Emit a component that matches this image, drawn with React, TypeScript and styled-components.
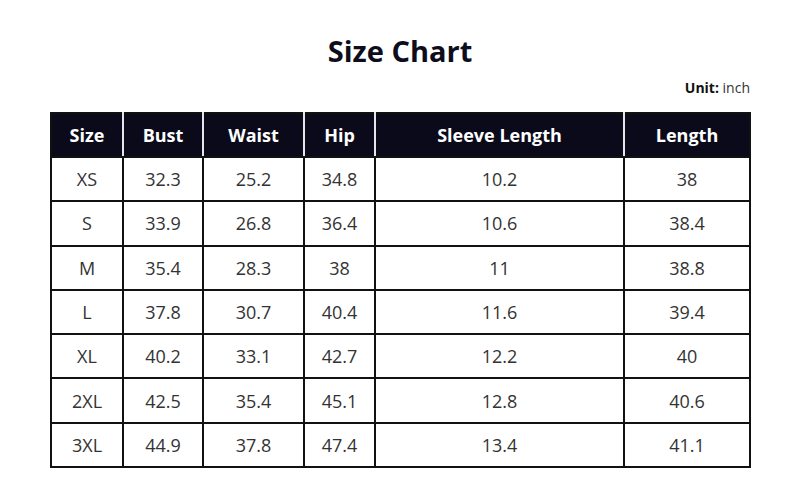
import React from 'react';
import styled, { createGlobalStyle } from 'styled-components';

const GlobalStyle = createGlobalStyle`
  body {
    margin: 0;
    background: #ffffff;
    font-family: "Open Sans", "Noto Sans", sans-serif;
  }
`;

const columns = [
  { label: 'Size', width: 70 },
  { label: 'Bust', width: 78 },
  { label: 'Waist', width: 99 },
  { label: 'Hip', width: 69 },
  { label: 'Sleeve Length', width: 247 },
  { label: 'Length', width: 124 }
];

const rows = [
  ['XS', '32.3', '25.2', '34.8', '10.2', '38'],
  ['S', '33.9', '26.8', '36.4', '10.6', '38.4'],
  ['M', '35.4', '28.3', '38', '11', '38.8'],
  ['L', '37.8', '30.7', '40.4', '11.6', '39.4'],
  ['XL', '40.2', '33.1', '42.7', '12.2', '40'],
  ['2XL', '42.5', '35.4', '45.1', '12.8', '40.6'],
  ['3XL', '44.9', '37.8', '47.4', '13.4', '41.1']
];

const Page = styled.div`
  width: 700px;
  margin: 0 auto;
  padding-top: 31px;
`;

const Title = styled.h1`
  margin: 0;
  text-align: center;
  font-size: 29px;
  font-weight: 700;
  line-height: 40px;
  color: #0d0d1c;
`;

const UnitLine = styled.div`
  text-align: right;
  font-size: 14px;
  line-height: 20px;
  color: #333;
  margin-top: 7px;
  margin-bottom: 14px;

  strong {
    font-weight: 700;
    color: #111;
  }
`;

const Table = styled.table`
  width: 699px;
  table-layout: fixed;
  border-collapse: collapse;
  border: 2px solid #111;
`;

const HeadCell = styled.th<{ $width: number }>`
  width: ${p => p.$width}px;
  height: 42px;
  padding: 0;
  background: #0b0a1a;
  color: #ffffff;
  font-size: 18px;
  font-weight: 700;
  text-align: center;
  border-left: 2px solid #e6e6ea;
  border-bottom: 2px solid #111;

  &:first-child {
    border-left: 2px solid #111;
  }
`;

const Cell = styled.td`
  height: 42.3px;
  padding: 0;
  text-align: center;
  font-size: 18px;
  color: #333;
  border: 2px solid #111;
`;

export default function App() {
  return (
    <>
      <GlobalStyle />
      <Page>
        <Title>Size Chart</Title>
        <UnitLine>
          <strong>Unit:</strong> inch
        </UnitLine>
        <Table>
          <thead>
            <tr>
              {columns.map(c => (
                <HeadCell key={c.label} $width={c.width}>
                  {c.label}
                </HeadCell>
              ))}
            </tr>
          </thead>
          <tbody>
            {rows.map(r => (
              <tr key={r[0]}>
                {r.map((v, i) => (
                  <Cell key={i}>{v}</Cell>
                ))}
              </tr>
            ))}
          </tbody>
        </Table>
      </Page>
    </>
  );
}
